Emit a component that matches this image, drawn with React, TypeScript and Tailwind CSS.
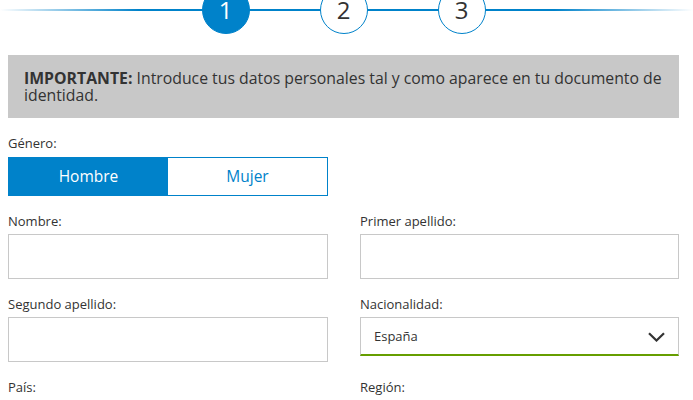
import React from "react";

function Step({ n, active }: { n: number; active?: boolean }) {
  return (
    <div
      className={
        "relative z-10 flex h-12 w-12 items-center justify-center rounded-full border text-[24px] leading-none " +
        (active
          ? "border-[#0082ca] bg-[#0082ca] text-white"
          : "border-[#0082ca] bg-white text-[#333]")
      }
    >
      {n}
    </div>
  );
}

function Label({ children }: { children: React.ReactNode }) {
  return <div className="mb-[5px] text-[13px] leading-4 text-[#333]">{children}</div>;
}

function Input() {
  return <div className="h-[45px] border border-[#c8c8c8] bg-white" />;
}

export default function App() {
  return (
    <div
      className="relative h-[400px] w-[693px] overflow-hidden bg-white text-[#333]"
      style={{ fontFamily: '"Open Sans", "Noto Sans", sans-serif' }}
    >
      <div
        className="absolute left-0 right-0 top-[9px] h-[2px]"
        style={{
          background:
            "linear-gradient(to right, rgba(0,130,202,0) 0%, #0082ca 20%, #0082ca 80%, rgba(0,130,202,0) 100%)",
        }}
      />
      <div className="pl-2 pr-[14px]">
        <div className="-mt-[14px] flex justify-center gap-[70px]">
          <Step n={1} active />
          <Step n={2} />
          <Step n={3} />
        </div>
        <div className="mt-[21px] bg-[#c8c8c8] pb-[14px] pl-4 pr-[2px] pt-[15px] text-[15.8px] leading-[17px] text-[#333]">
          <b>IMPORTANTE:</b> Introduce tus datos personales tal y como aparece en tu documento de identidad.
        </div>
        <div className="mt-[17px] w-[320px]">
          <div className="mb-[6px] text-[13px] leading-4">Género:</div>
          <div className="flex h-[39px] border border-[#0082ca] text-[15.5px]">
            <div className="flex flex-1 items-center justify-center bg-[#0082ca] text-white">Hombre</div>
            <div className="flex flex-1 items-center justify-center bg-white text-[#0082ca]">Mujer</div>
          </div>
        </div>
        <div className="mt-[17px] grid grid-cols-[320px_319px] gap-x-[32px] gap-y-[17px]">
          <div>
            <Label>Nombre:</Label>
            <Input />
          </div>
          <div>
            <Label>Primer apellido:</Label>
            <Input />
          </div>
          <div>
            <Label>Segundo apellido:</Label>
            <Input />
          </div>
          <div>
            <Label>Nacionalidad:</Label>
            <div className="flex h-[39px] items-center justify-between border border-b-2 border-[#c8c8c8] border-b-[#669e00] bg-white pl-[13px] pr-[13px] pt-[2px] text-[13px]">
              <span>España</span>
              <svg width="17" height="10" viewBox="0 0 17 10" fill="none">
                <path d="M1 1.2 L8.5 8.5 L16 1.2" stroke="#333" strokeWidth="2.2" />
              </svg>
            </div>
          </div>
          <div>
            <Label>País:</Label>
          </div>
          <div>
            <Label>Región:</Label>
          </div>
        </div>
      </div>
    </div>
  );
}
